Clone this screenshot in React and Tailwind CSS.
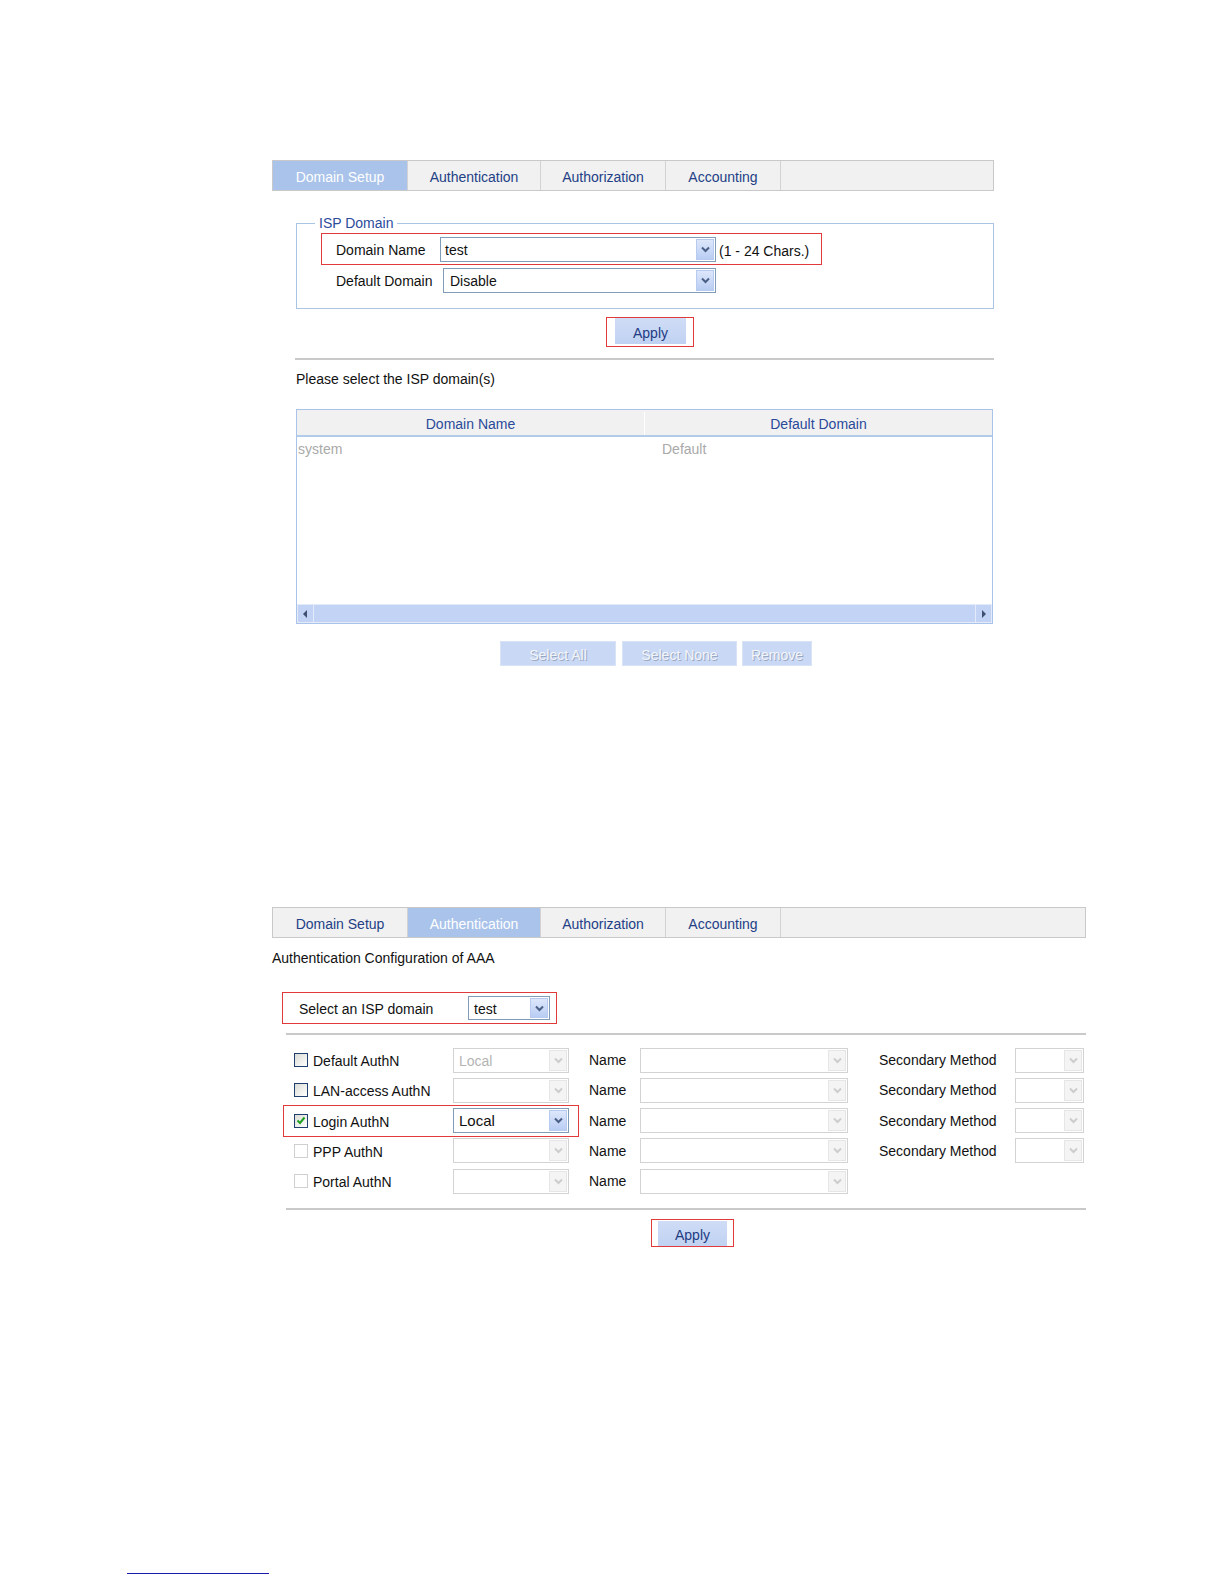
import React from "react";

const tabs1 = [
  { label: "Domain Setup", w: "w-[135px]" },
  { label: "Authentication", w: "w-[133px]" },
  { label: "Authorization", w: "w-[125px]" },
  { label: "Accounting", w: "w-[115px]" },
];

function TabBar({ active, className }) {
  return (
    <div className={`flex h-[31px] border border-[#c9c9c9] bg-[#f1f1f1] ${className}`}>
      {tabs1.map((t, i) => (
        <div
          key={t.label}
          className={`flex items-center justify-center border-r border-[#d2d2d2] pt-[3px] text-[14px] ${t.w} ${
            i === active ? "bg-[#a9c3ea] text-white" : "text-[#233f86]"
          }`}
        >
          {t.label}
        </div>
      ))}
    </div>
  );
}

function Arrow({ on }) {
  return (
    <span
      className={`flex h-full w-[18px] shrink-0 items-center justify-center border ${
        on
          ? "border-[#b7caf0] bg-linear-to-b from-[#dde7fb] to-[#b9cdf3]"
          : "border-[#e6e6e6] bg-[#f4f4f4]"
      }`}
    >
      <svg width="9" height="7" viewBox="0 0 9 7">
        <path
          d="M1 1.5 L4.5 5 L8 1.5"
          fill="none"
          stroke={on ? "#4a5f86" : "#cdcdcd"}
          strokeWidth="2"
        />
      </svg>
    </span>
  );
}

function Select({ className = "", value = "", on = false, pad = "pl-[4px]", size = "text-[14px]" }) {
  return (
    <div
      className={`flex shrink-0 items-stretch border bg-white p-px ${
        on ? "border-[#7f9db9] text-[#111]" : "border-[#d3d3d3] text-[#b4b4b4]"
      } ${className}`}
    >
      <span className={`flex flex-1 items-center pt-px ${pad} ${size}`}>{value}</span>
      <Arrow on={on} />
    </div>
  );
}

function Checkbox({ state }) {
  if (state === "checked") {
    return (
      <span className="flex h-[14px] w-[14px] shrink-0 items-center justify-center border border-[#1f3f6f] bg-linear-to-br from-[#dcdcd6] to-white">
        <svg width="10" height="9" viewBox="0 0 10 9">
          <path d="M1.5 4.5 L4 7 L8.5 1.5" fill="none" stroke="#21a121" strokeWidth="2" />
        </svg>
      </span>
    );
  }
  if (state === "off") {
    return <span className="h-[14px] w-[14px] shrink-0 border border-[#d0d0d0] bg-white" />;
  }
  return (
    <span className="h-[14px] w-[14px] shrink-0 border border-[#1f3f6f] bg-linear-to-br from-[#dcdcd6] to-white" />
  );
}

function Btn({ children, className = "" }) {
  return (
    <div
      className={`flex items-center justify-center bg-linear-to-b from-[#cfdcf6] to-[#c0d2f2] pt-[3px] text-[14px] text-[#1f3b82] ${className}`}
    >
      {children}
    </div>
  );
}

function GhostBtn({ children, className = "" }) {
  return (
    <div
      className={`flex h-[25px] items-center justify-center border border-[#d9e3f6] bg-[#c9d8f4] pt-[2px] text-[14px] text-[#f2f5fb] [text-shadow:1px_1px_0_#9aa7c0] ${className}`}
    >
      {children}
    </div>
  );
}

const authRows = [
  { label: "Default AuthN", box: "on", sel: "Local", sec: true },
  { label: "LAN-access AuthN", box: "on", sel: "", sec: true },
  { label: "Login AuthN", box: "checked", sel: "Local", sec: true, hl: true },
  { label: "PPP AuthN", box: "off", sel: "", sec: true },
  { label: "Portal AuthN", box: "off", sel: "", sec: false },
];

export default function App() {
  return (
    <div className="h-[1584px] w-[1224px] overflow-hidden bg-white pt-[160px] font-[Liberation_Sans,Arial,sans-serif] text-[14px] leading-[16px] text-[#111]">
      {/* Domain setup */}
      <div className="ml-[272px] w-[722px]">
        <TabBar active={0} className="w-[722px]" />

        <fieldset className="ml-[24px] mt-[24px] w-[698px] border border-[#a9c4e4] pb-[15px]">
          <legend className="ml-[18px] px-[4px] text-[#2b4b9b]">ISP Domain</legend>
          <div className="ml-[24px] mt-[2px] flex h-[32px] w-[501px] items-center border border-[#e03a3a]">
            <span className="w-[104px] shrink-0 pl-[14px] pt-px box-content">Domain Name</span>
            <Select className="h-[25px] w-[276px]" value="test" on pad="pl-[3px]" />
            <span className="ml-[3px] whitespace-nowrap pt-[3px]">(1 - 24 Chars.)</span>
          </div>
          <div className="ml-[39px] mt-[3px] flex items-center">
            <span className="w-[107px] shrink-0">Default Domain</span>
            <Select className="h-[25px] w-[273px]" value="Disable" on pad="pl-[5px]" />
          </div>
        </fieldset>

        <div className="ml-[334px] mt-[8px] h-[30px] w-[88px] border border-[#e03a3a] pl-[8px]">
          <Btn className="h-[26px] w-[71px]">Apply</Btn>
        </div>

        <div className="ml-[23px] mt-[11px] h-[2px] w-[699px] bg-[#c9c9c9]" />
        <div className="ml-[24px] mt-[11px]">Please select the ISP domain(s)</div>

        <div className="ml-[24px] mt-[22px] flex h-[215px] w-[697px] flex-col border border-[#a9c4e8]">
          <div className="flex h-[27px] shrink-0 border-b-2 border-[#b3cbea] bg-[#f1f1f1] pt-[2px] text-[#2a4a9a]">
            <div className="flex w-[348px] items-center justify-center border-r border-white">Domain Name</div>
            <div className="flex flex-1 items-center justify-center">Default Domain</div>
          </div>
          <div className="flex flex-1 text-[#a9a9a9]">
            <div className="w-[348px] pl-[1px] pt-[4px]">system</div>
            <div className="flex-1 pl-[17px] pt-[4px]">Default</div>
          </div>
          <div className="flex h-[19px] shrink-0 border border-[#e3ebfa] bg-[#c2d3f5]">
            <div className="flex w-[16px] items-center justify-center border-r border-[#e3ebfa]">
              <svg width="5" height="8" viewBox="0 0 5 8">
                <path d="M4 0 L0 4 L4 8 Z" fill="#3d4f72" />
              </svg>
            </div>
            <div className="flex-1" />
            <div className="flex w-[16px] items-center justify-center border-l border-[#e3ebfa]">
              <svg width="5" height="8" viewBox="0 0 5 8">
                <path d="M1 0 L5 4 L1 8 Z" fill="#3d4f72" />
              </svg>
            </div>
          </div>
        </div>

        <div className="ml-[228px] mt-[17px] flex">
          <GhostBtn className="w-[116px]">Select All</GhostBtn>
          <GhostBtn className="ml-[6px] w-[115px]">Select None</GhostBtn>
          <GhostBtn className="ml-[5px] w-[70px]">Remove</GhostBtn>
        </div>
      </div>

      {/* Authentication */}
      <div className="ml-[272px] mt-[241px] w-[814px]">
        <TabBar active={1} className="w-[814px]" />
        <div className="mt-[12px]">Authentication Configuration of AAA</div>

        <div className="ml-[10px] mt-[26px] flex h-[32px] w-[275px] items-center border border-[#e03a3a] pl-[16px]">
          <span className="w-[169px] shrink-0 pt-px">Select an ISP domain</span>
          <Select className="h-[24px] w-[82px]" value="test" on pad="pl-[4px]" />
        </div>

        <div className="ml-[14px] mt-[9px] h-[2px] w-[800px] bg-[#c9c9c9]" />

        <div className="mt-[10px]">
          {authRows.map((r) => (
            <div key={r.label} className="flex h-[30.25px] items-center">
              <div
                className={`ml-[11px] flex h-[32px] w-[296px] shrink-0 items-center border pl-[10px] ${
                  r.hl ? "border-[#e03a3a]" : "border-transparent"
                }`}
              >
                <Checkbox state={r.box} />
                <span className="ml-[5px] w-[140px] shrink-0 pt-[2px]">{r.label}</span>
                <Select
                  className="h-[25px] w-[116px]"
                  value={r.sel}
                  on={r.hl}
                  pad="pl-[4px]"
                  size={r.hl ? "text-[15px]" : "text-[14px]"}
                />
              </div>
              <span className="ml-[10px] w-[51px] shrink-0">Name</span>
              <Select className="h-[25px] w-[208px]" />
              {r.sec && (
                <>
                  <span className="ml-[31px] w-[136px] shrink-0">Secondary Method</span>
                  <Select className="h-[25px] w-[69px]" />
                </>
              )}
            </div>
          ))}
        </div>

        <div className="ml-[14px] mt-[12px] h-[2px] w-[800px] bg-[#c9c9c9]" />

        <div className="ml-[379px] mt-[9px] h-[28px] w-[83px] border border-[#e03a3a] pl-[6px] pt-[1px]">
          <Btn className="h-[25px] w-[69px]">Apply</Btn>
        </div>
      </div>

      <div className="ml-[127px] mt-[326px] h-px w-[142px] bg-[#1c1ca8]" />
    </div>
  );
}
